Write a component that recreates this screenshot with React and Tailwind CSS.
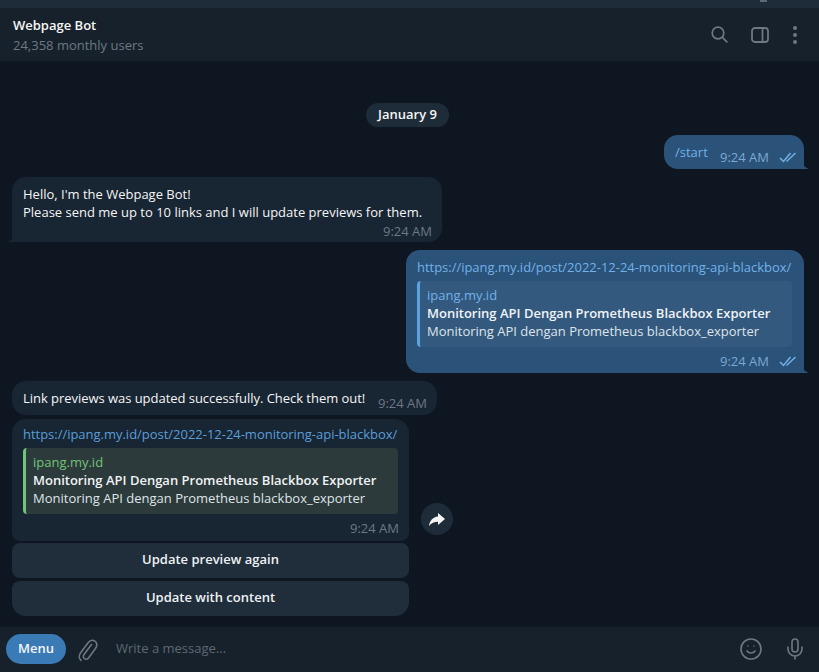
import React from "react";
import { Smile, Mic } from "lucide-react";

const URL = "https://ipang.my.id/post/2022-12-24-monitoring-api-blackbox/";

function Checks() {
  return (
    <svg width="18" height="12" viewBox="0 0 18 12" fill="none" stroke="#71b1e8" strokeWidth="1.5">
      <path d="M1 7l3.500 3.500L11.500 2" />
      <path d="M7.500 10.500L16.500 2" />
    </svg>
  );
}

function TailRight({ color }) {
  return (
    <svg className="absolute bottom-0 right-[-6px]" width="10" height="12" viewBox="0 0 10 12" fill={color}>
      <path d="M0 0C1 6 4 10 9 12H0z" />
    </svg>
  );
}

function TailLeft() {
  return (
    <svg className="absolute bottom-0 left-[-6px]" width="10" height="12" viewBox="0 0 10 12" fill="#182533">
      <path d="M10 0C9 6 6 10 1 12H10z" />
    </svg>
  );
}

function Preview({ mine }) {
  return (
    <div
      className={`mt-[5px] rounded-[4px] border-l-[3px] pl-[7px] pr-[10px] pt-[5px] pb-[7px] leading-[18px] ${
        mine ? "border-[#5ca3e0] bg-[#33597f]" : "border-[#72c476] bg-[#2c3a3b]"
      }`}
    >
      <div className={mine ? "text-[#71b1e8]" : "text-[#72c476]"}>ipang.my.id</div>
      <div className="font-semibold text-[#f0f3f5]">Monitoring API Dengan Prometheus Blackbox Exporter</div>
      <div className="text-[#dfe4e8]">Monitoring API dengan Prometheus blackbox_exporter</div>
    </div>
  );
}

function KeyboardButton({ children, last }) {
  return (
    <div
      className={`flex h-[35px] items-center justify-center bg-[#202d3b] pb-[2px] font-semibold text-[#eef1f4] ${
        last ? "rounded-t-[8px] rounded-b-[14px]" : "rounded-[8px]"
      }`}
    >
      {children}
    </div>
  );
}

export default function App() {
  return (
    <div
      className="flex h-[672px] w-[819px] flex-col overflow-hidden bg-[#0e1621] text-[13px] text-[#f5f5f5]"
      style={{ fontFamily: '"Open Sans", sans-serif' }}
    >
      {/* window title strip */}
      <div className="flex h-[8px] shrink-0 justify-end bg-[#1e2c3a] pr-[52px]">
        <span className="h-[2px] w-[7px] bg-[#5d6873]" />
      </div>

      <header className="flex h-[54px] shrink-0 items-center justify-between border-b border-[#101921] bg-[#17212b] pl-[13px] pr-[22px]">
        <div className="leading-[20px]">
          <div className="font-semibold text-[#f5f5f5]">Webpage Bot</div>
          <div className="text-[#6d7883]">24,358 monthly users</div>
        </div>
        <div className="flex items-center text-[#6d7883]">
          <svg className="mr-[23px]" width="17" height="17" viewBox="0 0 17 17" fill="none" stroke="currentColor" strokeWidth="1.7">
            <circle cx="7" cy="7" r="5.800" />
            <path d="M11.200 11.200L16.300 16.300" />
          </svg>
          <svg className="mr-[24px]" width="18" height="16" viewBox="0 0 18 16" fill="none" stroke="currentColor" strokeWidth="1.8">
            <rect x="1" y="1" width="16" height="14" rx="3" />
            <path d="M11.500 1v14" />
          </svg>
          <div className="flex flex-col gap-[3px]">
            <span className="h-[4px] w-[4px] rounded-full bg-current" />
            <span className="h-[4px] w-[4px] rounded-full bg-current" />
            <span className="h-[4px] w-[4px] rounded-full bg-current" />
          </div>
        </div>
      </header>

      <main className="flex min-h-0 flex-1 flex-col pl-[12px] pr-[15px] pt-[41px]">
        <div className="ml-[-1px] flex h-[24px] w-[83px] items-center justify-center self-center rounded-full bg-[#1e2c3a] font-semibold text-[#f5f5f5]">
          January 9
        </div>

        <div className="relative mt-[8px] flex h-[34px] w-[140px] self-end rounded-[14px] rounded-br-none bg-[#2b5278] pl-[11px] pr-[7px]">
          <span className="mt-[8px] text-[#71b1e8]">/start</span>
          <span className="ml-auto mt-[13px] flex items-center gap-[10px] self-start leading-[18px] text-[#7da8d3]">
            9:24 AM
            <Checks />
          </span>
          <TailRight color="#2b5278" />
        </div>

        <div className="relative mt-[8px] h-[65px] w-[430px] rounded-[14px] rounded-bl-none bg-[#182533] pl-[11px] pr-[10px] pt-[8px] leading-[18px]">
          <div>Hello, I'm the Webpage Bot!</div>
          <div>Please send me up to 10 links and I will update previews for them.</div>
          <div className="mt-[1px] text-right text-[#6d7883]">9:24 AM</div>
          <TailLeft />
        </div>

        <div className="relative mt-[8px] h-[123px] w-[398px] self-end rounded-[14px] rounded-br-none bg-[#2b5278] pl-[11px] pr-[12px] pt-[8px] leading-[18px]">
          <div className="whitespace-nowrap tracking-[-0.02px] text-[#71b1e8]">{URL}</div>
          <Preview mine />
          <div className="mr-[-5px] mt-[5px] flex items-center justify-end gap-[10px] text-[#7da8d3]">
            9:24 AM
            <Checks />
          </div>
          <TailRight color="#2b5278" />
        </div>

        <div className="mt-[8px] flex h-[34px] w-[425px] rounded-[14px] bg-[#182533] pl-[11px] pr-[10px]">
          <span className="mt-[8px] leading-[18px] tracking-[-0.04px]">Link previews was updated successfully. Check them out!</span>
          <span className="ml-auto mt-[13px] self-start leading-[18px] text-[#6d7883]">9:24 AM</span>
        </div>

        <div className="mt-[4px] flex items-end">
          <div className="w-[397px]">
            <div className="h-[122px] rounded-[14px] rounded-b-[8px] bg-[#182533] pl-[11px] pr-[11px] pt-[6px] leading-[18px]">
              <div className="whitespace-nowrap tracking-[-0.02px] text-[#5a9ed8]">{URL}</div>
              <Preview />
              <div className="mr-[-1px] mt-[5px] text-right text-[#6d7883]">9:24 AM</div>
            </div>
            <div className="mt-[2px] flex flex-col gap-[3px]">
              <KeyboardButton>Update preview again</KeyboardButton>
              <KeyboardButton last>Update with content</KeyboardButton>
            </div>
          </div>
          <div className="mb-[81px] ml-[12px] flex h-[32px] w-[32px] items-center justify-center rounded-full bg-[#1e2c3a]">
            <svg width="16" height="13" viewBox="0 0 16 13" fill="#f5f5f5">
              <path d="M9 0l7 6-7 6V8.800C5.200 8.800 2.400 10.200 0 13 .5 7.800 3.800 4 9 3.400z" />
            </svg>
          </div>
        </div>
      </main>

      <footer className="flex h-[46px] shrink-0 items-center border-t border-[#101921] bg-[#17212b] pb-[2px] pl-[6px] pr-[12px]">
        <div className="flex h-[30px] w-[60px] items-center justify-center rounded-full bg-[#3a7ab5] font-semibold text-[#f5f5f5]">
          Menu
        </div>
        <svg className="ml-[12px] mt-[2px] text-[#6d7883]" width="20" height="24" viewBox="0 0 20 24" fill="none" stroke="currentColor" strokeWidth="1.6" strokeLinecap="round">
          <path d="M13.500 6.500L6 16.500c-1.200 1.700-.8 3.300.5 4.200 1.400.9 3 .6 4.200-1L17.500 10.500c2-2.800 1.600-5.800-.6-7.300-2.300-1.500-5-.9-7 1.800L2.800 14.500c-2.300 3.200-1.800 6.300.2 7.800" />
        </svg>
        <span className="ml-[18px] text-[#5d6873]">Write a message...</span>
        <Smile size={24} strokeWidth={1.6} className="ml-auto text-[#6d7883]" />
        <Mic size={24} strokeWidth={1.6} className="ml-[20px] text-[#6d7883]" />
      </footer>
    </div>
  );
}
